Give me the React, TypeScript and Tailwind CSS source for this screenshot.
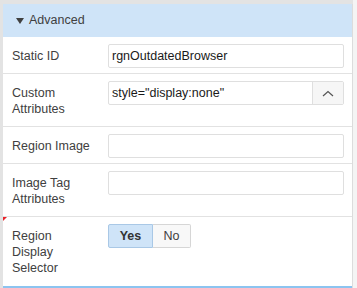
import React from "react";

const font = { fontFamily: '"Liberation Sans", Arial, sans-serif' };

function Row({ label, children, last }: { label: React.ReactNode; children: React.ReactNode; last?: boolean }) {
  return (
    <div className={`shrink-0 flex items-start pt-[7px] pb-[5px] ${last ? "" : "border-b border-[#e2e2e2]"}`}>
      <div className="w-[105px] shrink-0 pl-[9px] py-[4px] text-[12.5px] leading-[16px] text-[#404040]">{label}</div>
      <div className="flex-1 mr-[8px]">{children}</div>
    </div>
  );
}

function TextInput({ value }: { value?: string }) {
  return (
    <div className="h-[24px] border border-[#dfdfdf] rounded-[2px] bg-white px-[3px] text-[12.5px] leading-[22px] text-[#1a1a1a]">
      {value}
    </div>
  );
}

export default function App() {
  return (
    <div className="w-[357px] h-[288px] overflow-hidden bg-[#f4f4f4] flex" style={font}>
      <div className="w-[3px] shrink-0 bg-[#e3e3e3] relative">
        <div className="absolute left-[3px] top-[217px] w-0 h-0 border-t-[4px] border-t-[#e8232a] border-r-[4px] border-r-transparent" />
      </div>
      <div className="w-[350px] shrink-0 flex flex-col">
        <div className="h-[4px] shrink-0 bg-[#e3e3e3]" />
        <div className="flex-1 bg-white border-r border-[#dcdcdc] flex flex-col">
          <div className="h-[33px] shrink-0 bg-[#cfe4f8] flex items-center pl-[13px] text-[12.5px] text-[#404040]">
            <svg width="8" height="6" viewBox="0 0 8 6" className="mr-[5px]">
              <path d="M0 0 L8 0 L4 6 Z" fill="#404040" />
            </svg>
            <span>Advanced</span>
          </div>
          <Row label="Static ID">
            <TextInput value="rgnOutdatedBrowser" />
          </Row>
          <Row label={<>Custom<br />Attributes</>}>
            <div className="h-[24px] flex border border-[#dfdfdf] rounded-[2px] bg-white">
              <div className="flex-1 px-[3px] text-[12.5px] leading-[22px] text-[#1a1a1a]">style="display:none"</div>
              <div className="w-[31px] border-l border-[#dfdfdf] bg-[#f6f6f6] flex items-center justify-center">
                <svg width="12" height="7" viewBox="0 0 12 7" fill="none">
                  <path d="M1 6 L6 1.5 L11 6" stroke="#555" strokeWidth="1.2" />
                </svg>
              </div>
            </div>
          </Row>
          <Row label="Region Image">
            <TextInput />
          </Row>
          <Row label={<>Image Tag<br />Attributes</>}>
            <TextInput />
          </Row>
          <Row label={<>Region<br />Display<br />Selector</>} last>
            <div className="flex h-[24px] text-[12.5px]">
              <div className="w-[45px] flex items-center justify-center bg-[#cfe4f8] border border-[#a9c8e6] rounded-l-[2px] font-bold text-[#333]">Yes</div>
              <div className="w-[38px] flex items-center justify-center bg-[#f8f8f8] border border-l-0 border-[#d6d6d6] rounded-r-[2px] text-[#404040]">No</div>
            </div>
          </Row>
          <div className="flex-1" />
          <div className="h-[2px] shrink-0 bg-[#8cc4f0]" />
        </div>
      </div>
    </div>
  );
}
